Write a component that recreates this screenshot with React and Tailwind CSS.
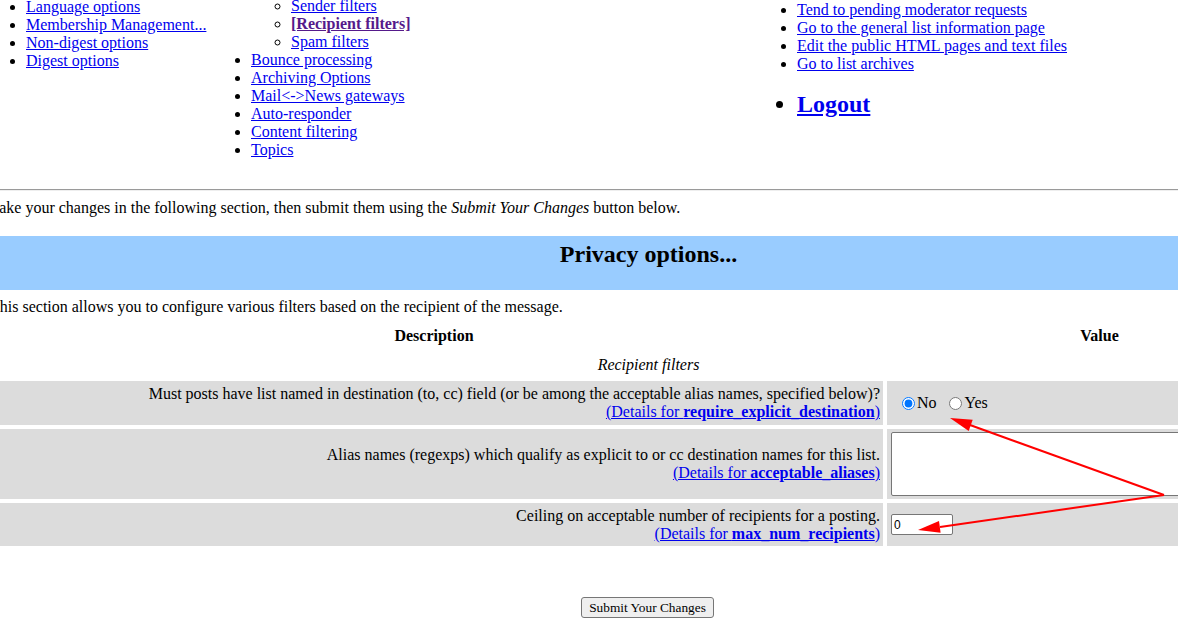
const LEFT = ['General Options', 'Passwords', 'Language options', 'Membership Management...', 'Non-digest options', 'Digest options'];
const PRIVACY_SUB = ['Subscription rules', 'Sender filters', '[Recipient filters]', 'Spam filters'];
const MIDDLE = ['Bounce processing', 'Archiving Options', 'Mail<->News gateways', 'Auto-responder', 'Content filtering', 'Topics'];
const OTHER = ['Tend to pending moderator requests', 'Go to the general list information page', 'Edit the public HTML pages and text files', 'Go to list archives'];

function Link({ children, bold }) {
    return (
        <a href="#" className={bold ? 'text-[#551a8b] font-bold underline' : 'text-[#0000ee] underline'}>
            {children}
        </a>
    );
}

function Details({ name }) {
    return (
        <a href="#" className="text-[#0000ee] underline">
            (Details for <b>{name}</b>)
        </a>
    );
}

function Row({ h, desc, name, children }) {
    return (
        <div className={`flex gap-[4px] ${h}`}>
            <div className="w-[898px] bg-[#dcdcdc] flex flex-col justify-center items-end text-right pr-[3px]">
                <div>{desc}</div>
                <div><Details name={name} /></div>
            </div>
            <div className="w-[425px] bg-[#dcdcdc] flex items-center">{children}</div>
        </div>
    );
}

export default function App() {
    return (
        <div className="relative w-[1178px] h-[636px] overflow-hidden bg-white text-black text-[16px] leading-[18px] font-['Liberation_Serif',serif]">
            <div className="w-[1327px] -ml-[15px]">
                {/* category links */}
                <div className="flex h-[228px] -mt-[39px]">
                    <div className="w-[225px] p-[1px]">
                        <ul className="list-disc pl-[40px]">
                            {LEFT.map(t => <li key={t}><Link>{t}</Link></li>)}
                        </ul>
                    </div>
                    <div className="w-[546px] p-[1px] -mt-[1px]">
                        <ul className="list-disc pl-[40px]">
                            <li>
                                <Link>Privacy options...</Link>
                                <ul className="list-[circle] pl-[40px]">
                                    {PRIVACY_SUB.map(t => (
                                        <li key={t}><Link bold={t.startsWith('[')}>{t}</Link></li>
                                    ))}
                                </ul>
                            </li>
                            {MIDDLE.map(t => <li key={t}><Link>{t}</Link></li>)}
                        </ul>
                    </div>
                    <div className="flex-1 p-[1px] pt-[40px]">
                        <ul className="list-disc pl-[40px]">
                            {OTHER.map(t => <li key={t}><Link>{t}</Link></li>)}
                        </ul>
                        <ul className="list-disc pl-[40px] mt-[17px]">
                            <li className="text-[24px] leading-[28px]">
                                <a href="#" className="text-[#0000ee] font-bold underline">Logout</a>
                            </li>
                        </ul>
                    </div>
                </div>

                <div className="border-t border-t-[#9a9a9a] border-b border-b-[#eeeeee]" />

                <p className="mt-[8px]">
                    Make your changes in the following section, then submit them using the <i>Submit Your Changes</i> button below.
                </p>

                <div className="mt-[19px] h-[54px] bg-[#99ccff] pt-[4px] text-center">
                    <div className="text-[24px] leading-[28px] font-bold">Privacy options...</div>
                </div>

                <p className="mt-[8px] pl-[5px]">
                    This section allows you to configure various filters based on the recipient of the message.
                </p>

                <div className="mt-[11px] flex gap-[4px] font-bold">
                    <div className="w-[898px] text-center">Description</div>
                    <div className="w-[425px] text-center">Value</div>
                </div>

                <div className="mt-[11px] text-center italic">Recipient filters</div>

                <div className="mt-[7px] flex flex-col gap-[4px]">
                    <Row
                        h="h-[44px]"
                        desc="Must posts have list named in destination (to, cc) field (or be among the acceptable alias names, specified below)?"
                        name="require_explicit_destination"
                    >
                        <input type="radio" name="red" defaultChecked className="m-0 ml-[15px] w-[13px] h-[13px]" />
                        <span className="ml-[2px]">No</span>
                        <input type="radio" name="red" className="m-0 ml-[12px] w-[13px] h-[13px]" />
                        <span className="ml-[3px]">Yes</span>
                    </Row>
                    <Row
                        h="h-[70px]"
                        desc="Alias names (regexps) which qualify as explicit to or cc destination names for this list."
                        name="acceptable_aliases"
                    >
                        <textarea className="ml-[4px] w-[420px] h-[64px] bg-white border border-[#767676] rounded-[2px] resize-none" />
                    </Row>
                    <Row
                        h="h-[43px]"
                        desc="Ceiling on acceptable number of recipients for a posting."
                        name="max_num_recipients"
                    >
                        <input
                            type="text"
                            defaultValue="0"
                            className="ml-[4px] w-[62px] h-[21px] bg-white border border-[#767676] rounded-[2px] px-[2px] text-[12px] font-['Liberation_Sans',sans-serif]"
                        />
                    </Row>
                </div>

                <div className="mt-[51px] flex justify-center">
                    <button className="-ml-[2px] w-[133px] h-[21px] bg-[#efefef] border border-[#767676] rounded-[3px] text-[13.33px] leading-[15px]">
                        Submit Your Changes
                    </button>
                </div>
            </div>

            {/* annotation arrows */}
            <svg className="absolute inset-0 pointer-events-none" width="1178" height="636">
                <line x1="1164" y1="495" x2="970" y2="425" stroke="#ff0000" strokeWidth="2" />
                <polygon points="950,418 972.7,419.8 968.7,431.1" fill="#ff0000" />
                <line x1="1164" y1="495" x2="940" y2="527" stroke="#ff0000" strokeWidth="2" />
                <polygon points="918,530 940.6,532.8 939,520.9" fill="#ff0000" />
            </svg>
        </div>
    );
}
